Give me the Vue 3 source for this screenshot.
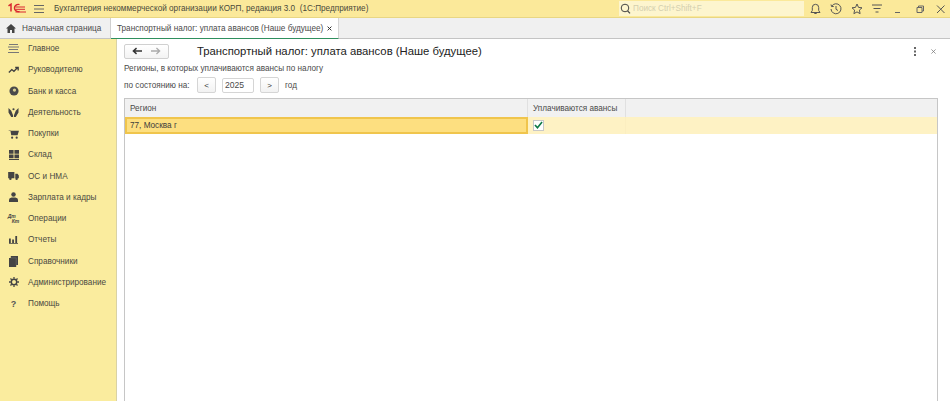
<script setup>
const items = [
  { t: 'Главное', i: 'menu' }, { t: 'Руководителю', i: 'trend' }, { t: 'Банк и касса', i: 'bank' },
  { t: 'Деятельность', i: 'hands' }, { t: 'Покупки', i: 'cart' }, { t: 'Склад', i: 'grid' },
  { t: 'ОС и НМА', i: 'truck' }, { t: 'Зарплата и кадры', i: 'user' }, { t: 'Операции', i: 'ops' },
  { t: 'Отчеты', i: 'bars' }, { t: 'Справочники', i: 'book' }, { t: 'Администрирование', i: 'gear' }, { t: 'Помощь', i: 'help' }
]
</script>

<template>
  <div class="app">
    <header class="top">
      <svg class="logo" width="18" height="11" viewBox="0 0 18 11">
        <path d="M.5 2.8 3 1.2V8.5" fill="none" stroke="#d9272e" stroke-width="1.5"/>
        <path d="M11.5 1.6A3.8 3.6 0 1 0 11.5 8.4" fill="none" stroke="#d9272e" stroke-width="1.4"/>
        <path d="M7.5 4H17M7.5 6.3H17M7.5 9H18" fill="none" stroke="#d9272e" stroke-width="1"/>
      </svg>
      <svg class="burger" width="10" height="8" viewBox="0 0 10 8"><path d="M0 .5H10M0 4H10M0 7.5H10" stroke="#666" stroke-width="1"/></svg>
      <span class="apptitle">Бухгалтерия некоммерческой организации КОРП, редакция 3.0&nbsp; (1С:Предприятие)</span>
      <div class="search">
        <svg width="11" height="11" viewBox="0 0 11 11"><circle cx="5" cy="5" r="3.8" fill="none" stroke="#444" stroke-width="1"/><path d="M7.6 7.8 10 10.4" stroke="#444" stroke-width="1.2"/></svg>
        <span>Поиск Ctrl+Shift+F</span>
      </div>
      <div class="tools">
        <svg width="11" height="12" viewBox="0 0 11 12"><path d="M1 9.5H10L8.7 7.5V4.5A3.2 3.2 0 0 0 2.3 4.5V7.5ZM4.3 10.5H6.7" fill="none" stroke="#555"/></svg>
        <svg width="12" height="12" viewBox="0 0 12 12"><path d="M1.7 3.2A5 5 0 1 1 1 6M1 1.5 1.6 3.6 3.8 3.4M6 3V6.3L8 7.5" fill="none" stroke="#555"/></svg>
        <svg width="12" height="12" viewBox="0 0 12 12"><path d="M6 1 7.5 4.4 11 4.8 8.4 7.1 9.1 10.7 6 8.9 2.9 10.7 3.6 7.1 1 4.8 4.5 4.4Z" fill="none" stroke="#555"/></svg>
        <svg width="12" height="12" viewBox="0 0 12 12"><path d="M0 2H10M1.5 5.5H8.5M3.5 9H6.5" stroke="#555"/></svg>
        <svg width="12" height="12" viewBox="0 0 12 12"><path d="M2 9.5H7" stroke="#666"/></svg>
        <svg width="12" height="12" viewBox="0 0 12 12"><path d="M3 4.5H8V9.5H3ZM4.5 4.5V3H9.5V8H8" fill="none" stroke="#666"/></svg>
        <svg width="12" height="12" viewBox="0 0 12 12"><path d="M2 2.5 9.5 10M9.5 2.5 2 10" stroke="#555"/></svg>
      </div>
    </header>

    <nav class="tabs">
      <div class="home">
        <svg width="10" height="9" viewBox="0 0 10 9"><path d="M5 0 10 4.6H8.5V9H6V6H4V9H1.5V4.6H0Z" fill="#444"/></svg>
        <span>Начальная страница</span>
      </div>
      <div class="tab">
        <span>Транспортный налог: уплата авансов (Наше будущее)</span>
        <svg width="5" height="5" viewBox="0 0 6 6"><path d="M.7.7 5.3 5.3M5.3.7.7 5.3" stroke="#333" stroke-width="1.2"/></svg>
      </div>
    </nav>

    <div class="body">
      <aside class="side">
        <div v-for="it in items" :key="it.t" class="item">
          <span class="ic">
            <svg v-if="it.i === 'menu'" width="11" height="9" viewBox="0 0 11 9"><path d="M1 .5H10M0 3H11M1 5.5H10M0 8.5H11" stroke="#777" stroke-width="1"/></svg>
            <svg v-else-if="it.i === 'trend'" width="11" height="8" viewBox="0 0 13 9"><path d="M1 7.5 4.5 4 7 6 11 2M8.5 1.5H12V5" fill="none" stroke="#3f3f3f" stroke-width="1.6"/></svg>
            <svg v-else-if="it.i === 'bank'" width="10" height="10" viewBox="0 0 11 11"><circle cx="5.5" cy="5.5" r="5" fill="#4a4a4a"/><circle cx="6" cy="4.5" r="1.8" fill="#d8cf90"/></svg>
            <svg v-else-if="it.i === 'hands'" width="11" height="10" viewBox="0 0 11 11"><path d="M0 1 3 4 5 9V11H3L0 6ZM11 1 8 4 6 9V11H8L11 6Z" fill="#444"/><circle cx="5.5" cy="2.5" r="1.2" fill="#444"/></svg>
            <svg v-else-if="it.i === 'cart'" width="11" height="10" viewBox="0 0 12 11"><path d="M0 1H2.5L3.5 7H10.5L12 2H3Z" fill="#444"/><circle cx="4.5" cy="9.5" r="1.2" fill="#444"/><circle cx="9.5" cy="9.5" r="1.2" fill="#444"/></svg>
            <svg v-else-if="it.i === 'grid'" width="10" height="10" viewBox="0 0 11 11"><path d="M0 0H5V4H0ZM6 0H11V4H6ZM0 5H5V9H0ZM6 5H11V9H6ZM0 10H11V11H0Z" fill="#444"/></svg>
            <svg v-else-if="it.i === 'truck'" width="11" height="8" viewBox="0 0 12 9"><path d="M0 0H7V7H0ZM8 2H10.5L12 4V7H8Z" fill="#444"/><circle cx="2.5" cy="7.5" r="1.4" fill="#444"/><circle cx="9.5" cy="7.5" r="1.4" fill="#444"/></svg>
            <svg v-else-if="it.i === 'user'" width="9" height="10" viewBox="0 0 10 11"><circle cx="5" cy="2.6" r="2.5" fill="#444"/><path d="M0 11V8.5Q0 6.4 3 6H7Q10 6.4 10 8.5V11Z" fill="#444"/></svg>
            <span v-else-if="it.i === 'ops'" class="ops"><i>Дт</i><i>Кт</i></span>
            <svg v-else-if="it.i === 'bars'" width="9" height="9" viewBox="0 0 10 10"><path d="M0 4H2V9H0ZM3.5 5H5.5V9H3.5ZM7 1H9V9H7ZM0 9.2H10V10H0Z" fill="#444"/></svg>
            <svg v-else-if="it.i === 'book'" width="9" height="11" viewBox="0 0 10 12"><path d="M2 0H10V10H8V12H0V2H2Z" fill="#444"/><path d="M2 2H8V10" fill="none" stroke="#777" stroke-width=".6"/></svg>
            <svg v-else-if="it.i === 'gear'" width="10" height="10" viewBox="0 0 11 11"><circle cx="5.5" cy="5.5" r="3" fill="none" stroke="#444" stroke-width="1.6"/><path d="M5.5 0V2M5.5 9V11M0 5.5H2M9 5.5H11M1.6 1.6 3 3M8 8 9.4 9.4M1.6 9.4 3 8M8 3 9.4 1.6" stroke="#444" stroke-width="1.4"/></svg>
            <span v-else class="q">?</span>
          </span>
          <span class="lbl">{{ it.t }}</span>
        </div>
      </aside>

      <main class="main">
        <div class="head">
          <div class="navbtns">
            <svg width="10" height="8" viewBox="0 0 11 8"><path d="M11 4H2M5 .8 1.5 4 5 7.2" fill="none" stroke="#333" stroke-width="1.6"/></svg>
            <svg width="10" height="8" viewBox="0 0 11 8"><path d="M0 4H9M6 .8 9.5 4 6 7.2" fill="none" stroke="#aaa" stroke-width="1.4"/></svg>
          </div>
          <h1>Транспортный налог: уплата авансов (Наше будущее)</h1>
          <div class="headtools">
            <svg width="3" height="9" viewBox="0 0 3 9"><path d="M0 0H2V2H0ZM0 3.5H2V5.5H0ZM0 7H2V9H0Z" fill="#666"/></svg>
            <svg width="5" height="5" viewBox="0 0 6 6"><path d="M.5.5 5.5 5.5M5.5.5.5 5.5" stroke="#777" stroke-width=".9"/></svg>
          </div>
        </div>
        <p class="sub">Регионы, в которых уплачиваются авансы по налогу</p>
        <div class="yearrow">
          <span class="asof">по состоянию на:</span>
          <button class="step">&lt;</button>
          <span class="year">2025</span>
          <button class="step">&gt;</button>
          <span>год</span>
        </div>
        <div class="table">
          <div class="row hdr">
            <div class="c c1">Регион</div>
            <div class="c c2">Уплачиваются авансы</div>
            <div class="c c3"></div>
          </div>
          <div class="row sel">
            <div class="c c1 cur">77, Москва г</div>
            <div class="c c2">
              <span class="chk"><svg width="9" height="8" viewBox="0 0 10 9"><path d="M1 4.5 3.8 7.5 9 1" fill="none" stroke="#0e7a46" stroke-width="1.8"/></svg></span>
            </div>
            <div class="c c3"></div>
          </div>
        </div>
      </main>
    </div>
  </div>
</template>

<style>
html, body { margin: 0; overflow: hidden; }
</style>

<style scoped>
.app { width: 950px; height: 401px; display: flex; flex-direction: column; overflow: hidden; font-family: "Liberation Sans", Arial, sans-serif; font-size: 8.2px; color: #4a4a4a; background: #fff; }
.top { height: 18px; flex: none; display: flex; align-items: center; background: #fbe99a; border-bottom: 1px solid #e8d684; box-sizing: border-box; }
.logo { margin-left: 8px; flex: none; }
.burger { margin-left: 8px; flex: none; }
.apptitle { margin-left: 10px; white-space: nowrap; color: #4a4a3a; }
.search { margin-left: auto; width: 185px; height: 15px; background: #fdf5ce; display: flex; align-items: center; gap: 2px; padding-left: 1px; box-sizing: border-box; color: #d4cfae; }
.search svg { flex: none; }
.tools { display: flex; align-items: center; gap: 9px; padding-left: 6px; padding-right: 3px; }
.tabs { height: 20px; flex: none; display: flex; background: #f0f0f0; border-bottom: 1px solid #c4c4c4; }
.home { width: 111px; flex: none; display: flex; align-items: center; gap: 6px; padding-left: 6px; box-sizing: border-box; border-right: 1px solid #cfcfcf; white-space: nowrap; }
.tab { width: 228px; flex: none; background: #fff; border-right: 1px solid #d5d5d5; border-bottom: 1px solid #2f8f5e; display: flex; align-items: center; gap: 4px; padding-left: 6px; box-sizing: border-box; height: 21px; white-space: nowrap; }
.body { flex: 1; display: flex; min-height: 0; }
.side { width: 117px; flex: none; box-sizing: border-box; background: #faec9e; border-right: 1px solid #d9d2a5; }
.item { height: 21.25px; display: flex; align-items: center; }
.side .item:first-child { margin-top: -1px; }
.ic { width: 28px; flex: none; display: flex; justify-content: center; padding-right: 1px; box-sizing: border-box; }
.lbl { white-space: nowrap; color: #4a4a42; }
.ops { display: flex; flex-direction: column; font-size: 5px; line-height: 4.5px; font-weight: bold; color: #444; }
.ops i:last-child { margin-left: 4px; }
.q { font-size: 9px; font-weight: bold; color: #555; line-height: 10px; }
.main { flex: 1; min-width: 0; padding: 0 12px 0 7px; display: flex; flex-direction: column; }
.head { height: 24px; display: flex; align-items: center; flex: none; }
.navbtns { width: 45px; height: 15px; flex: none; box-sizing: border-box; border: 1px solid #d0d0d0; border-radius: 2px; background: linear-gradient(#fff, #f3f3f3); display: flex; align-items: center; justify-content: space-around; padding: 0 3px; }
h1 { margin: 0 0 0 28px; font-size: 11.3px; font-weight: normal; color: #222; white-space: nowrap; }
.headtools { margin-left: auto; display: flex; align-items: center; gap: 14px; padding-right: 2px; }
.sub { margin: 0; height: 11px; line-height: 11px; flex: none; }
.yearrow { display: flex; align-items: center; height: 16px; margin-top: 3px; margin-bottom: 5px; flex: none; }
.asof { width: 73px; flex: none; white-space: nowrap; }
.step { width: 19px; height: 16px; margin: 0; padding: 0; border: 1px solid #d5d5d5; border-radius: 2px; background: linear-gradient(#fff, #f2f2f2); font: 8px "Liberation Sans", sans-serif; color: #333; }
.year { width: 32px; height: 15px; line-height: 13px; margin: 0 6px; padding-left: 2px; box-sizing: border-box; border: 1px solid #d5d5d5; border-radius: 2px; font-size: 8.6px; }
.yearrow > span:last-child { margin-left: 6px; }
.table { flex: 1; border: 1px solid #c6c6c6; border-bottom: 0; }
.row { display: flex; }
.hdr { height: 18px; background: #f1f1f1; }
.sel { height: 17px; background: #fef2c4; }
.c { box-sizing: border-box; padding-left: 5px; display: flex; align-items: center; white-space: nowrap; }
.c1 { width: 403px; flex: none; }
.c2 { width: 98px; flex: none; }
.c3 { flex: 1; }
.hdr .c1, .hdr .c2 { border-right: 1px solid #e0e0e0; }
.sel .c2 { border-right: 1px solid #fbeec0; }
.cur { background: #fddf80; border: 2px solid #f0c54c; padding-left: 3px; color: #3c3c3c; }
.chk { width: 11px; height: 11px; box-sizing: border-box; border: 1px solid #c8c8c8; background: #fff; display: flex; align-items: center; justify-content: center; }
.chk svg { flex: none; position: relative; top: -1px; }
</style>
